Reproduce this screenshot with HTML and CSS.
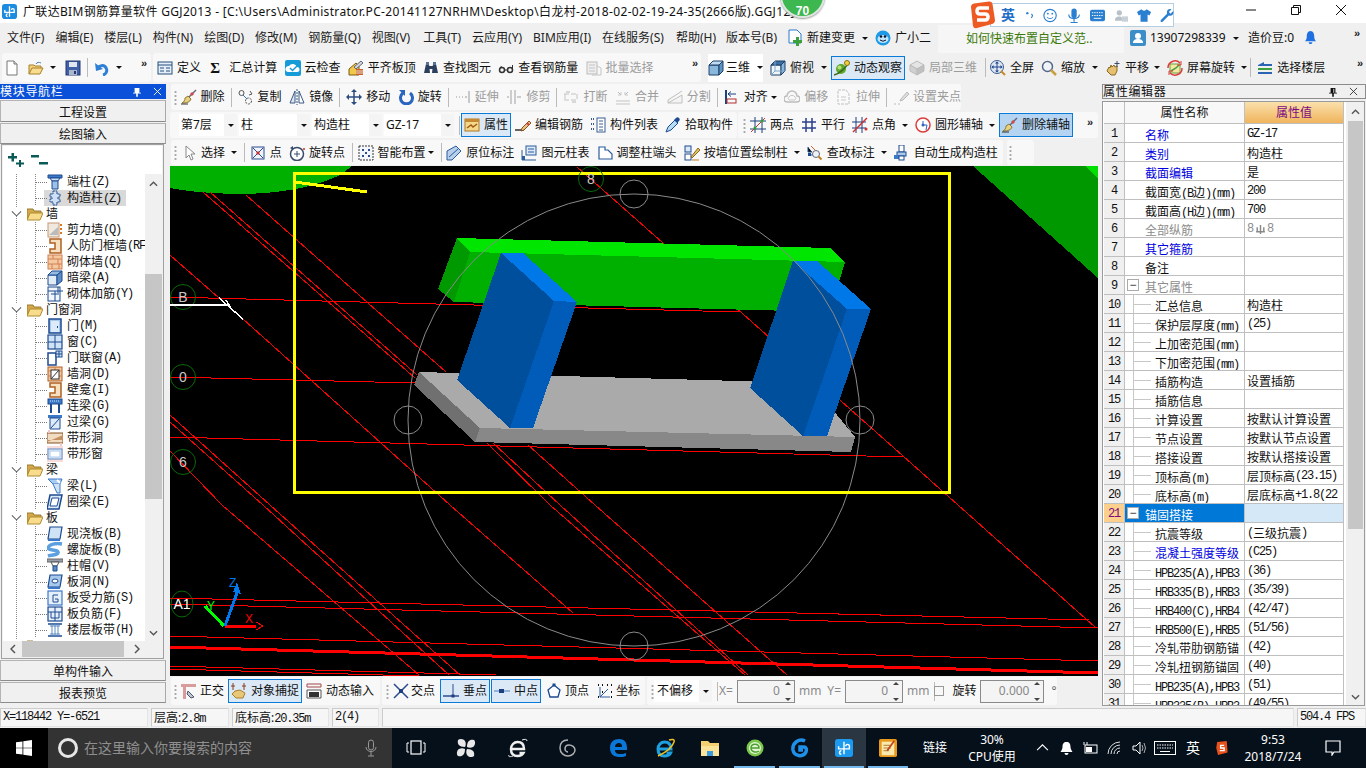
FILE: index.html
```html
<!DOCTYPE html>
<html lang="zh">
<head>
<meta charset="utf-8">
<title>广联达BIM钢筋算量软件 GGJ2013</title>
<link rel="stylesheet" href="styles.css">
</head>
<body>
<svg class="defs" xmlns="http://www.w3.org/2000/svg">
<symbol id="doc" viewBox="0 0 16 16"><path d="M3 1h7l3 3v11H3z" fill="#fff" stroke="#777"/><path d="M10 1v3h3" fill="#ddd" stroke="#777"/></symbol>
<symbol id="open" viewBox="0 0 16 16"><path d="M1 14V5h5l1 1h6v2" fill="#f4d27a" stroke="#a8802c"/><path d="M1 14l3-6h11l-3 6z" fill="#f8dc90" stroke="#a8802c"/><path d="M8 4c1-2 3-2 5-1" fill="none" stroke="#4a78b8"/></symbol>
<symbol id="save" viewBox="0 0 16 16"><rect x="1" y="1" width="14" height="14" fill="#3f5fa6" stroke="#23386c"/><rect x="4" y="2" width="8" height="5" fill="#dfe6f2"/><rect x="4" y="10" width="8" height="5" fill="#aab6cc"/><rect x="9" y="11" width="2" height="3" fill="#23386c"/></symbol>
<symbol id="undo" viewBox="0 0 16 16"><path d="M9 15c4-1 5-6 2-8.500-2-1.500-5-1-7 1" fill="none" stroke="#2f7fd6" stroke-width="3"/><path d="M1 3l1 8 7-2z" fill="#2f7fd6"/></symbol>
<symbol id="def" viewBox="0 0 16 16"><rect x="1" y="2" width="14" height="12" fill="#e6eef8" stroke="#24507e"/><path d="M1 5h14M3 8h4M3 11h4M9 8h4M9 11h4" stroke="#24507e" fill="none"/></symbol>
<symbol id="cloud" viewBox="0 0 16 16"><rect x="0" y="0" width="16" height="16" rx="2" fill="#169ad8"/><path d="M3 12a3 3 0 0 1 1-6 4.500 4.500 0 0 1 8 1 2.500 2.500 0 0 1 0 5z" fill="#fff"/><path d="M5 8l2.500 2.500L12 6" stroke="#169ad8" stroke-width="1.500" fill="none"/></symbol>
<symbol id="alignb" viewBox="0 0 16 16"><path d="M1 9l7-6 3 3v9H1z" fill="#f2c84a" stroke="#7a5a10"/><rect x="8" y="9" width="7" height="6" fill="#c8622c"/><path d="M8 11h7M8 13h7" stroke="#f2dcc8"/><path d="M6 7l7-6 2 2-7 6z" fill="#cfd6de" stroke="#667"/></symbol>
<symbol id="bino" viewBox="0 0 16 16"><path d="M1 13l2-9h3l1 9zM9 13l1-9h3l2 9z" fill="#2c3f5c"/><rect x="6" y="6" width="4" height="3" fill="#2c3f5c"/><rect x="3" y="2" width="3" height="3" fill="#5c7292"/><rect x="10" y="2" width="3" height="3" fill="#5c7292"/></symbol>
<symbol id="glass" viewBox="0 0 16 16"><circle cx="4" cy="10" r="2.500" fill="none" stroke="#333" stroke-width="1.500"/><circle cx="12" cy="10" r="2.500" fill="none" stroke="#333" stroke-width="1.500"/><path d="M6.500 10h3M1.500 9l2-3M14.500 9V5" stroke="#333" fill="none"/></symbol>
<symbol id="batch" viewBox="0 0 16 16"><rect x="1" y="2" width="10" height="12" fill="#eee" stroke="#bbb"/><path d="M3 5h6M3 8h6M3 11h6M11 6l4 2v7H6" stroke="#c4c4c4" fill="none"/></symbol>
<symbol id="cube" viewBox="0 0 16 16"><path d="M1 5h10v10H1z" fill="#8ab8dc" stroke="#1c3f66"/><path d="M1 5l4-4h10l-4 4z" fill="#c0dcf0" stroke="#1c3f66"/><path d="M11 5l4-4v10l-4 4z" fill="#5c94c4" stroke="#1c3f66"/></symbol>
<symbol id="cube2" viewBox="0 0 16 16"><path d="M1 5h10v10H1z" fill="#eef6fc" stroke="#1c3f66"/><path d="M1 5l4-4h10l-4 4z" fill="#3c70a4" stroke="#1c3f66"/><path d="M11 5l4-4v10l-4 4z" fill="#8ab8dc" stroke="#1c3f66"/><path d="M5 1v10H15M5 11l-4 4" stroke="#7ea4c8" fill="none"/></symbol>
<symbol id="orbit" viewBox="0 0 16 16"><circle cx="7" cy="9" r="5" fill="#5ea82c"/><circle cx="5.500" cy="7.500" r="2" fill="#b8e080"/><path d="M0 15C5 14 12 8 15 2" stroke="#3a6c18" fill="none" stroke-width="1.500"/><circle cx="13" cy="3" r="2.500" fill="#f0d040" stroke="#8a7010"/></symbol>
<symbol id="part" viewBox="0 0 16 16"><path d="M8 1l7 4-7 4-7-4z" fill="#e4e4e4" stroke="#bbb"/><path d="M1 5v6l7 4V9z" fill="#d0d0d0" stroke="#bbb"/><path d="M15 5v6l-7 4V9z" fill="#c0c0c0" stroke="#bbb"/></symbol>
<symbol id="full" viewBox="0 0 16 16"><circle cx="7" cy="7" r="6.500" fill="#dde8f4" stroke="#3a5c90"/><path d="M7 2v10M2 7h10" stroke="#24468a" fill="none"/><path d="M7 1.500l-2 2h4zM7 12.500l-2-2h4zM1.500 7l2-2v4zM12.500 7l-2-2v4z" fill="#24468a"/><path d="M11 11l4 4" stroke="#c88a20" stroke-width="2"/></symbol>
<symbol id="zoomi" viewBox="0 0 16 16"><circle cx="6.500" cy="6.500" r="5" fill="#eef3f8" stroke="#55688a" stroke-width="1.500"/><path d="M3.500 5a3 3 0 0 1 3-2" stroke="#fff" fill="none"/><path d="M10 10l5 5" stroke="#c8a040" stroke-width="2.500"/></symbol>
<symbol id="pan" viewBox="0 0 16 16"><path d="M2 11l2-4 1 1 1-3 1 2 2-2 1 2 2-1v5l-2 4H6z" fill="#e4c070" stroke="#8a6a20"/><path d="M12 1v6M9.500 3.500h5" stroke="#3a4a6a"/></symbol>
<symbol id="rot" viewBox="0 0 16 16"><rect x="3" y="4" width="10" height="9" fill="#f2e8a0" stroke="#6aa040"/><path d="M4 11l5-3 3-3" stroke="#48a048" fill="none" stroke-width="1.500"/><path d="M1 8a7 7 0 0 1 12-5M15 8a7 7 0 0 1-12 5" fill="none" stroke="#dc3c3c" stroke-width="1.500"/><path d="M14 1v4h-4M2 15v-4h4" fill="none" stroke="#dc3c3c"/></symbol>
<symbol id="floors" viewBox="0 0 16 16"><path d="M1 5l6-3v2h8v2H1z" fill="#2c64b4"/><path d="M1 8h14v2H1z" fill="#3ca03c"/><path d="M1 12h14v2H1z" fill="#2c64b4"/></symbol>
<symbol id="broom" viewBox="0 0 16 16"><path d="M15 1L7 9" stroke="#667" stroke-width="1.500"/><path d="M10 4l2 2" stroke="#d24a4a" stroke-width="3"/><path d="M7 7l3 3c-1 3-4 4-9 4 2-1 3-3 3-5z" fill="#e8d080" stroke="#8a7a30"/><path d="M0 15h7" stroke="#333"/></symbol>
<symbol id="copy" viewBox="0 0 16 16"><circle cx="3.500" cy="4" r="2.500" fill="none" stroke="#555"/><circle cx="10.500" cy="12" r="3" fill="none" stroke="#555" stroke-dasharray="2 1"/><path d="M5 6l4 4" stroke="#3a72c0"/><path d="M12 2l2 3-3 1" fill="none" stroke="#555"/></symbol>
<symbol id="mirror" viewBox="0 0 16 16"><path d="M6 2L1 14h5z" fill="#dce6f2" stroke="#3a5a84"/><path d="M10 2l5 12h-5z" fill="#fff" stroke="#3a5a84"/><path d="M8 0v16" stroke="#3a5a84" stroke-dasharray="2 1"/></symbol>
<symbol id="move" viewBox="0 0 16 16"><path d="M8 2v12M2 8h12" stroke="#2a4c80" stroke-width="1.500"/><path d="M8 0L5 3h6zM8 16l-3-3h6zM0 8l3-3v6zM16 8l-3-3v6z" fill="#2a4c80"/></symbol>
<symbol id="turn" viewBox="0 0 16 16"><path d="M5 4a6 6 0 1 0 7 0" fill="none" stroke="#2a66c0" stroke-width="3"/><path d="M1 1h6v6z" fill="#2a66c0"/></symbol>
<symbol id="ext" viewBox="0 0 16 16"><path d="M14 2v12M1 8h1M4 8h1M7 8h1M10 8h2" stroke="#b8b8b8" stroke-width="1.500"/></symbol>
<symbol id="trim" viewBox="0 0 16 16"><path d="M5 1v14M9 1v14M1 8h2M11 8h4" stroke="#bdbdbd" stroke-width="1.500"/></symbol>
<symbol id="brk" viewBox="0 0 16 16"><path d="M1 5h14M1 11h14M2 5v6M14 5v6" stroke="#c4c4c4" stroke-dasharray="5 2"/><path d="M3 3h4M13 13H9" stroke="#b8b8b8"/></symbol>
<symbol id="mrg" viewBox="0 0 16 16"><path d="M1 12h14M1 15h14" stroke="#c4c4c4"/><path d="M3 3l3 3M13 3l-3 3" stroke="#b8b8b8"/><path d="M6 3v3H3M10 3v3h3" fill="none" stroke="#c8c8c8"/></symbol>
<symbol id="spl" viewBox="0 0 16 16"><path d="M1 14h14V6L1 14zM1 14v-3l14-9" fill="#f4f4f4" stroke="#c0c0c0"/></symbol>
<symbol id="aln" viewBox="0 0 16 16"><path d="M2 1v14" stroke="#1c3f80" stroke-width="2"/><rect x="3" y="10" width="9" height="4" fill="none" stroke="#b03030"/><path d="M4 5h8M4 5l3-2.500M4 5l3 2.500" stroke="#1c3f80" fill="none"/></symbol>
<symbol id="off" viewBox="0 0 16 16"><path d="M3 13a3 3 0 0 1 0-6 5 5 0 0 1 10 0 3 3 0 0 1 0 6z" fill="none" stroke="#bdbdbd" stroke-width="1.500"/><path d="M5 11a2 2 0 0 1 0-3 3.500 3.500 0 0 1 6 0 2 2 0 0 1 0 3z" fill="none" stroke="#c8c8c8"/></symbol>
<symbol id="str" viewBox="0 0 16 16"><path d="M2 1h8l3 4v10H2z" fill="#fafafa" stroke="#c0c0c0" stroke-dasharray="3 1"/><path d="M5 8h5M5 11h5" stroke="#c8c8c8"/></symbol>
<symbol id="grp" viewBox="0 0 16 16"><path d="M1 15h2M5 15h2" stroke="#bbb"/><path d="M8 10l6-7 2 2-6 6-3 1z" fill="#ddd" stroke="#bbb"/></symbol>
<symbol id="attr" viewBox="0 0 16 16"><rect x="1" y="2" width="14" height="12" fill="#f5d88c" stroke="#b0781c"/><rect x="1" y="2" width="14" height="3" fill="#c88a30"/><path d="M3 11l4-3 2 2 4-3" stroke="#a05c10" fill="none" stroke-width="1.500"/></symbol>
<symbol id="edit" viewBox="0 0 16 16"><path d="M0 13h9" stroke="#333" stroke-width="1.500"/><path d="M7 11l7-7 2 2-7 7-3 1z" fill="#e8c080" stroke="#8a5020"/><path d="M12 6l2 2" stroke="#d04040" stroke-width="2"/></symbol>
<symbol id="lst" viewBox="0 0 16 16"><rect x="7" y="1" width="8" height="14" fill="#fff" stroke="#3a5c90"/><path d="M9 4h4M9 7h4M9 10h4M9 13h4" stroke="#3a5c90"/><path d="M1 2h3M1 7h3M1 12h3" stroke="#3a5c90" stroke-width="2" stroke-dasharray="1 1"/></symbol>
<symbol id="pick" viewBox="0 0 16 16"><path d="M1 15l2-5 7-7 3 3-7 7z" fill="#b8dcf4" stroke="#1c4a90"/><path d="M9 3l2-2c1-1 2-1 3 0s1 2 0 3l-2 2" fill="#1c4a90"/></symbol>
<symbol id="two" viewBox="0 0 16 16"><path d="M5 0v16M12 0v16M0 4h16M0 12h16" stroke="#1c3f80"/><path d="M1 15L15 1" stroke="#d03030"/><circle cx="5" cy="11" r="1.500" fill="#30a030"/><circle cx="12" cy="4" r="1.500" fill="#30a030"/></symbol>
<symbol id="par" viewBox="0 0 16 16"><path d="M5 1v14M11 1v14M1 5h14M1 11h14" stroke="#2c3f8c" stroke-width="1.500"/></symbol>
<symbol id="ang" viewBox="0 0 16 16"><path d="M4 0v16M10 0v16M0 5h14M0 11h14" stroke="#1c3f80"/><path d="M1 15L15 1" stroke="#d03030" stroke-width="1.500"/><circle cx="14" cy="12" r="1.500" fill="#d03030"/></symbol>
<symbol id="circ" viewBox="0 0 16 16"><circle cx="8" cy="8" r="7" fill="#fff" stroke="#dc3c3c" stroke-width="1.500"/><path d="M8 8V4M8 8h4l-1 5" stroke="#2a66c0" fill="none"/><circle cx="8" cy="8" r="1.500" fill="#2a66c0"/></symbol>
<symbol id="sel" viewBox="0 0 16 16"><path d="M5 1v12l3-3 2 5 2-1-2-5h4z" fill="#fff" stroke="#888"/></symbol>
<symbol id="pnt" viewBox="0 0 16 16"><rect x="2" y="2" width="12" height="12" fill="#f0f4fa" stroke="#2c4c90"/><path d="M3 3l10 10M13 3L3 13" stroke="#2c4c90"/><rect x="6.500" y="6.500" width="3" height="3" fill="#c83030"/></symbol>
<symbol id="rpt" viewBox="0 0 16 16"><circle cx="8" cy="9" r="6.500" fill="#fff" stroke="#3a4c68" stroke-width="1.500"/><path d="M8 6v6M5 9h6" stroke="#3a4c68"/><path d="M1 3l3-2v4z" fill="#3a4c68"/><circle cx="15" cy="4" r="1" fill="#c83030"/></symbol>
<symbol id="smart" viewBox="0 0 16 16"><rect x="1" y="1" width="14" height="14" fill="#f4f8fc" stroke="#333" stroke-dasharray="2 1"/><path d="M4 4h2v2H4zM10 4h2v2h-2zM7 7h2v2H7zM4 10h2v2H4zM10 10h2v2h-2z" fill="#2c4c90"/></symbol>
<symbol id="orig" viewBox="0 0 16 16"><path d="M1 15V6l9-5 5 5-9 9z" fill="#b8d0ec" stroke="#2c5c9c"/><path d="M3 12l9-8" stroke="#2c5c9c"/></symbol>
<symbol id="ctab" viewBox="0 0 16 16"><rect x="5" y="1" width="10" height="9" fill="#dce8f6" stroke="#2c5c9c"/><path d="M7 4h6M7 7h6" stroke="#2c5c9c"/><path d="M1 5v10h14" stroke="#2c5c9c" fill="none"/><rect x="1" y="11" width="3" height="4" fill="#2c5c9c"/></symbol>
<symbol id="adj" viewBox="0 0 16 16"><path d="M2 2h6v3h3l4 4v5H2z" fill="#fff" stroke="#2c5c9c" stroke-width="1.200"/></symbol>
<symbol id="wdraw" viewBox="0 0 16 16"><rect x="1" y="1" width="6" height="6" fill="#dce8f6" stroke="#1c4a90"/><rect x="1" y="9" width="6" height="6" fill="#fff" stroke="#1c4a90"/><path d="M8 15h7" stroke="#c08020"/><path d="M7 12l7-9 2 2-8 8z" fill="#e0c060" stroke="#8a6a20"/></symbol>
<symbol id="chk" viewBox="0 0 16 16"><path d="M1 2v5h4M1 10h5" stroke="#1c4a90"/><rect x="1" y="8" width="3" height="3" fill="#1c4a90"/><circle cx="9" cy="9" r="3.500" fill="#eef3f8" stroke="#667"/><path d="M11.500 11.500l3 3" stroke="#c08020" stroke-width="2"/><path d="M4 1l4 4" stroke="#d06030"/></symbol>
<symbol id="auto" viewBox="0 0 16 16"><rect x="5" y="0" width="5" height="7" fill="#fff" stroke="#1c4a90"/><rect x="3" y="7" width="9" height="4" fill="#a8c8ec" stroke="#1c4a90"/><rect x="0" y="10" width="5" height="4" fill="#3c78c8"/><rect x="5" y="11" width="5" height="4" fill="#fff" stroke="#1c4a90"/></symbol>
<symbol id="ortho" viewBox="0 0 16 16"><path d="M1 1h15v3H6v12H3V4H1z" fill="#d89c9c"/><path d="M8 8l6 6-3 1-4-4z" fill="#b8c8d4" stroke="#556"/></symbol>
<symbol id="snap" viewBox="0 0 16 16"><path d="M2 0v7M13 0v7" stroke="#8a3a20"/><path d="M0 3h4M11 3h4" stroke="#8a3a20"/><path d="M1 11l3-3 5-1 5 3-2 5H5z" fill="#e8c878" stroke="#a8802c"/></symbol>
<symbol id="dyn" viewBox="0 0 16 16"><path d="M1 1h14M1 4h14M1 1v3M15 1v3" stroke="#a04848"/><path d="M1 7h14v8H1z" fill="#fff" stroke="#555"/><rect x="3" y="9" width="10" height="5" fill="#333"/></symbol>
<symbol id="cross" viewBox="0 0 16 16"><path d="M1 1l14 14M15 1L1 15" stroke="#2c4c90" stroke-width="1.500"/><rect x="6" y="6" width="4" height="4" fill="#1c3f80"/></symbol>
<symbol id="perp" viewBox="0 0 16 16"><path d="M0 13h16" stroke="#2c4c90" stroke-width="1.500"/><path d="M10 1v12" stroke="#2c4c90"/><rect x="8.500" y="11.500" width="3" height="3" fill="#1c3f80"/></symbol>
<symbol id="mid" viewBox="0 0 16 16"><path d="M0 8h16" stroke="#7aa0d0" stroke-width="1.500"/><rect x="5" y="6" width="5" height="4" fill="#1c3f80"/></symbol>
<symbol id="vtx" viewBox="0 0 16 16"><path d="M8 2l6 5-2 7H4L2 7z" fill="#fff" stroke="#1c4a90" stroke-width="1.300"/><rect x="6.500" y="0.500" width="3" height="3" fill="#1c4a90"/></symbol>
<symbol id="coo" viewBox="0 0 16 16"><path d="M3 14V4M3 14h10M3 14l8-8" stroke="#2c5ca4"/><path d="M1 2h1M5 2h1M10 2h1M14 2h1M1 14h1M14 14h1M14 9h1M5 9h1" stroke="#111" stroke-width="2"/></symbol>
<symbol id="t-col" viewBox="0 0 16 16"><path d="M1 1h14v3H1z" fill="#3c78c8" stroke="#1c4a90"/><path d="M3 4h10L11 7H5z" fill="#cfe2f6" stroke="#1c4a90"/><path d="M5 7h6v8H5z" fill="#9cc0e8" stroke="#1c4a90"/></symbol>
<symbol id="t-gz" viewBox="0 0 16 16"><path d="M6 1h4v3h3v3h-2v2h2v3h-3v3H6v-3H3V9h2V7H3V4h3z" fill="#cfe0f4" stroke="#1c4a90" stroke-dasharray="2 .5"/></symbol>
<symbol id="t-shear" viewBox="0 0 16 16"><rect x="1" y="1" width="11" height="14" fill="#efe9e0" stroke="#c89870"/><path d="M2 13l9-8v8z" fill="#bbb"/><path d="M14 2v12" stroke="#d87820" stroke-width="2" stroke-dasharray="2 2"/></symbol>
<symbol id="t-rf" viewBox="0 0 16 16"><path d="M3 1h11v14H3v-4h5V5H3z" fill="#f6e0c0" stroke="#b06020" stroke-width="1.500"/></symbol>
<symbol id="t-brick" viewBox="0 0 16 16"><rect x="1" y="1" width="14" height="14" fill="#f4c8a0" stroke="#d08050"/><path d="M1 5h14M1 10h14M6 1v4M11 5v5M5 10v5M12 10v5" stroke="#d08050"/></symbol>
<symbol id="t-dark" viewBox="0 0 16 16"><path d="M1 5v10h9V5z" fill="#e2ecf6" stroke="#1c4a90"/><path d="M1 5l4-4h10l-5 4z" fill="#98bce0" stroke="#1c4a90"/><path d="M10 5l5-4v10l-5 4z" fill="#5c8cc4" stroke="#1c4a90"/></symbol>
<symbol id="t-add" viewBox="0 0 16 16"><rect x="1" y="1" width="12" height="14" fill="#f2f6fc" stroke="#1c4a90"/><path d="M1 5h15M4 8h8M8 5v10M11 1v6" stroke="#1c4a90"/></symbol>
<symbol id="t-door" viewBox="0 0 16 16"><rect x="2" y="1" width="12" height="14" fill="#a8c8ec" stroke="#1c4a90" stroke-width="1.500"/><rect x="4" y="3" width="8" height="11" fill="#dceafa"/><rect x="10" y="8" width="1" height="2" fill="#1c4a90"/></symbol>
<symbol id="t-win" viewBox="0 0 16 16"><rect x="1" y="1" width="14" height="14" fill="#cfe2f6" stroke="#1c4a90" stroke-width="1.200"/><path d="M8 1v14M1 8h14" stroke="#1c4a90"/></symbol>
<symbol id="t-dw" viewBox="0 0 16 16"><rect x="1" y="3" width="8" height="12" fill="#fff" stroke="#1c4a90" stroke-width="1.500"/><rect x="9" y="1" width="6" height="6" fill="#cfe2f6" stroke="#1c4a90"/><path d="M12 1v6M9 4h6" stroke="#1c4a90"/></symbol>
<symbol id="t-hole" viewBox="0 0 16 16"><rect x="1" y="1" width="14" height="14" fill="#f4c8a0" stroke="#b06020"/><path d="M1 5h14M1 10h14M8 1v4" stroke="#d08050"/><rect x="4" y="4" width="8" height="9" fill="#fff" stroke="#333"/><path d="M4 13l8-9" stroke="#333"/></symbol>
<symbol id="t-ll" viewBox="0 0 16 16"><rect x="1" y="1" width="14" height="5" fill="#3c78c8" stroke="#1c4a90"/><path d="M3 3h10" stroke="#cfe2f6" stroke-dasharray="1 1"/><path d="M4 6v9M12 6v9" stroke="#1c4a90" stroke-width="2"/></symbol>
<symbol id="t-gl" viewBox="0 0 16 16"><rect x="1" y="1" width="14" height="3" fill="#3c78c8"/><path d="M3 4h10v11H3z" fill="#dceafa" stroke="#1c4a90"/><path d="M4 14l8-9" stroke="#1c4a90"/></symbol>
<symbol id="t-bh" viewBox="0 0 16 16"><rect x="0" y="3" width="16" height="10" fill="#f0dcc0" stroke="#8a5020"/><path d="M0 12L16 5v5H0z" fill="#c89060"/><path d="M2 0v3M14 13v3" stroke="#f0c8c8" stroke-width="2"/></symbol>
<symbol id="t-bw" viewBox="0 0 16 16"><path d="M0 0h16v16H0z" fill="#f8dcdc"/><rect x="1" y="3" width="14" height="10" fill="#e6eefa" stroke="#5c8cc4"/><rect x="3" y="5" width="10" height="6" fill="#fff" stroke="#a8c8ec"/></symbol>
<symbol id="t-beam" viewBox="0 0 16 16"><path d="M1 1h14l-2 5H6z" fill="#a8cdf0" stroke="#3c78c8"/><path d="M6 6l4 9h3V6" fill="#cfe2f6" stroke="#3c78c8"/><path d="M10 2l3 3" stroke="#fff" stroke-width="2"/></symbol>
<symbol id="t-ring" viewBox="0 0 16 16"><path d="M3 1h12l-3 14H0z" fill="#dceafa" stroke="#1c4a90" stroke-width="1.500"/><path d="M5 4h7l-2 8H3z" fill="#fff" stroke="#1c4a90"/></symbol>
<symbol id="t-slab" viewBox="0 0 16 16"><path d="M3 1h12l-2 12H1z" fill="#cfe2f6" stroke="#1c4a90" stroke-width="1.200"/><path d="M1 13h12v2H1z" fill="#3c78c8"/></symbol>
<symbol id="t-spi" viewBox="0 0 16 16"><path d="M15 2C9 1 2 2 1 6c0 3 9 1 10 4s-7 3-10 4" fill="none" stroke="#5ca0e0" stroke-width="3.500"/></symbol>
<symbol id="t-cap" viewBox="0 0 16 16"><path d="M0 1h16v3H0z" fill="#9a9ea8" stroke="#666"/><path d="M4 4h8l-2 4H6z" fill="#fff" stroke="#555"/><path d="M6 8h4v5H6z" fill="#5c8cc4" stroke="#1c4a90"/></symbol>
<symbol id="t-sh" viewBox="0 0 16 16"><path d="M3 1h12l-2 12H1z" fill="#a8c8ec" stroke="#1c4a90" stroke-width="1.200"/><ellipse cx="8" cy="7" rx="3" ry="2" fill="#fff" stroke="#1c4a90"/><path d="M1 13h12v2H1z" fill="#3c78c8"/></symbol>
<symbol id="t-rs" viewBox="0 0 16 16"><rect x="1" y="1" width="14" height="14" fill="#e6eefa" stroke="#3c78c8" stroke-width="1.200"/><path d="M11 5H6v7h5V9H8" fill="none" stroke="#1c4a90"/></symbol>
<symbol id="t-rf2" viewBox="0 0 16 16"><rect x="1" y="1" width="14" height="14" fill="#e6eefa" stroke="#1c4a90" stroke-width="1.200"/><path d="M1 6h14M8 1v14M4 6v6M12 6v6M4 12h8" stroke="#1c4a90"/></symbol>
<symbol id="t-band" viewBox="0 0 16 16"><path d="M1 2h14M1 14h14" stroke="#1c4a90" stroke-width="1.500"/><path d="M3 4h10M3 12h10M5 2v12M8 2v12M11 2v12" stroke="#5c8cc4"/></symbol>
<symbol id="folder" viewBox="0 0 16 16"><path d="M0 13V3h6l1 2h7v3H3l-3 5z" fill="#d4a848" stroke="#9a7a30"/><path d="M0 14l3-7h13l-3 7z" fill="#f8dc8c" stroke="#b08a30"/></symbol>
<symbol id="pin" viewBox="0 0 10 12"><path d="M2 1h6v6h2v1H0V7h2zM4 8h2v4H4z" fill="#111"/><rect x="5.500" y="2" width="1" height="5" fill="#fff"/></symbol>
</svg>

<div class="app">
  <header class="title">
    <svg class="appicon" viewBox="0 0 16 16"><rect width="16" height="16" rx="3" fill="#1c8ce0"/><path d="M8 2.500v11M3 6.500v2.500h10V6.500a1.500 1.500 0 0 0-3 0M6 10.500a1.500 1.500 0 0 0 0 3" fill="none" stroke="#fff" stroke-width="1.400"/></svg>
    <span class="title-text">广联达BIM钢筋算量软件 GGJ2013 - [C:\Users\Administrator.PC-20141127NRHM\Desktop\白龙村-2018-02-02-19-24-35(2666版).GGJ12]</span>
    <div class="winbtns">
      <svg class="wb" viewBox="0 0 12 12"><path d="M1 6h10" stroke="#111"/></svg>
      <svg class="wb" viewBox="0 0 12 12"><path d="M1.500 3.500h7v7h-7zM3.500 3.500v-2h7v7h-2" fill="none" stroke="#111"/></svg>
      <svg class="wb" viewBox="0 0 12 12"><path d="M1 1l10 10M11 1L1 11" stroke="#111"/></svg>
    </div>
  </header>

  <nav class="menubar">
    <span class="mi">文件(F)</span><span class="mi">编辑(E)</span><span class="mi">楼层(L)</span><span class="mi">构件(N)</span><span class="mi">绘图(D)</span><span class="mi">修改(M)</span><span class="mi">钢筋量(Q)</span><span class="mi">视图(V)</span><span class="mi">工具(T)</span><span class="mi">云应用(Y)</span><span class="mi">BIM应用(I)</span><span class="mi">在线服务(S)</span><span class="mi">帮助(H)</span><span class="mi">版本号(B)</span>
    <span class="t newchg"><svg class="i" viewBox="0 0 16 16"><path d="M2 0h8l4 4v9H2z" fill="#fff" stroke="#2a7bd0"/><path d="M6 10h3V7h3v3h3v3h-3v3H9v-3H6z" fill="#3ca03c"/></svg>新建变更<i class="dd dd-m"></i></span>
    <span class="t xiao"><svg class="i" viewBox="0 0 16 16"><circle cx="8" cy="8" r="7.500" fill="#1c9ae8"/><ellipse cx="8" cy="9" rx="5.500" ry="4" fill="#bfe6fb"/><circle cx="6" cy="6.500" r="1.300" fill="#113"/><circle cx="10" cy="6.500" r="1.300" fill="#113"/><path d="M5 10q3 2.500 6 0" stroke="#113" fill="none"/></svg>广小二</span>
    <span class="news">如何快速布置自定义范..</span>
    <span class="t user"><svg class="i" viewBox="0 0 16 16"><rect width="16" height="16" rx="2" fill="#3c8ec8"/><circle cx="8" cy="6" r="3" fill="#fff"/><path d="M3 13c0-3 2-4 5-4s5 1 5 4z" fill="#fff"/></svg>13907298339<i class="dd dd-u"></i></span>
    <span class="bean">造价豆:0</span>
    <svg class="bell" viewBox="0 0 14 16"><path d="M7 1c3 0 4 3 4 6 0 3 1 4 2 5H1c1-1 2-2 2-5 0-3 1-6 4-6z" fill="#1f6fe0"/><path d="M5 13h4a2 2 0 0 1-4 0z" fill="#1f6fe0"/></svg>
    <b class="more more-m">»</b>
  </nav>

  <div class="tb1">
    <div class="grp g1">
      <svg class="i"><use href="#doc"/></svg><svg class="i fo"><use href="#open"/></svg><i class="dd"></i><svg class="i sv"><use href="#save"/></svg><i class="sep"></i><svg class="i"><use href="#undo"/></svg><i class="dd"></i><b class="more">»</b>
    </div>
    <div class="grp g2">
      <span class="t"><svg class="i"><use href="#def"/></svg>定义</span>
      <span class="t sg"><b class="sigma">Σ</b>汇总计算</span>
      <span class="t"><svg class="i"><use href="#cloud"/></svg>云检查</span>
      <span class="t"><svg class="i"><use href="#alignb"/></svg>平齐板顶</span>
      <span class="t"><svg class="i"><use href="#bino"/></svg>查找图元</span>
      <span class="t"><svg class="i"><use href="#glass"/></svg>查看钢筋量</span>
      <span class="t off"><svg class="i"><use href="#batch"/></svg>批量选择</span>
      <b class="more m-end">»</b>
    </div>
    <div class="grp g3">
      <span class="t w3"><svg class="i"><use href="#cube"/></svg>三维<i class="dd"></i></span>
      <span class="t"><svg class="i"><use href="#cube2"/></svg>俯视<i class="dd"></i></span>
      <span class="t on"><svg class="i"><use href="#orbit"/></svg>动态观察</span>
      <span class="t off"><svg class="i"><use href="#part"/></svg>局部三维</span>
      <i class="sep"></i>
      <span class="t"><svg class="i"><use href="#full"/></svg>全屏</span>
      <span class="t"><svg class="i"><use href="#zoomi"/></svg>缩放<i class="dd"></i></span>
      <span class="t"><svg class="i"><use href="#pan"/></svg>平移<i class="dd dd-s"></i></span>
      <span class="t"><svg class="i"><use href="#rot"/></svg>屏幕旋转<i class="dd dd-n"></i></span>
      <i class="sep sep-b"></i>
      <span class="t"><svg class="i"><use href="#floors"/></svg>选择楼层</span>
      <b class="more m-end">»</b>
    </div>
  </div>

  <main class="work">
    <aside class="left">
      <div class="nav-head"><span>模块导航栏</span><svg class="pin" viewBox="0 0 10 12"><path d="M2 1h6v6h2v1H0V7h2zM4 8h2v4H4z" fill="#fff"/></svg><svg class="xx" viewBox="0 0 10 10"><path d="M1 1l8 8M9 1L1 9" stroke="#fff"/></svg></div>
      <div class="navbtn">工程设置</div>
      <div class="navbtn h21">绘图输入</div>
      <div class="treebox">
        <div class="treetool">
          <svg class="pm" viewBox="0 0 18 14"><path d="M3.500 0H6v3h3v2.500H6v3H3.500v-3H0V3h3.500zM11 7h2v2.500h3v2h-3V14h-2v-2.500H8v-2h3z" fill="#0a5a58"/></svg>
          <svg class="pm" viewBox="0 0 18 14"><path d="M0 2h8v2.500H0zM8 9h9v2.500H8z" fill="#0a5a58"/></svg>
        </div>
        <div class="treewrap">
          <div class="tree">
            <div class="n leaf"><svg class="i"><use href="#t-col"/></svg>端柱<i class="m">(Z)</i></div>
            <div class="n leaf last"><svg class="i"><use href="#t-gz"/></svg><span class="hl">构造柱<i class="m">(Z)</i></span></div>
            <div class="n fold"><i class="chev"></i><svg class="i"><use href="#folder"/></svg>墙</div>
            <div class="n leaf"><svg class="i"><use href="#t-shear"/></svg>剪力墙<i class="m">(Q)</i></div>
            <div class="n leaf"><svg class="i"><use href="#t-rf"/></svg>人防门框墙<i class="m">(RF</i></div>
            <div class="n leaf"><svg class="i"><use href="#t-brick"/></svg>砌体墙<i class="m">(Q)</i></div>
            <div class="n leaf"><svg class="i"><use href="#t-dark"/></svg>暗梁<i class="m">(A)</i></div>
            <div class="n leaf last"><svg class="i"><use href="#t-add"/></svg>砌体加筋<i class="m">(Y)</i></div>
            <div class="n fold"><i class="chev"></i><svg class="i"><use href="#folder"/></svg>门窗洞</div>
            <div class="n leaf"><svg class="i"><use href="#t-door"/></svg>门<i class="m">(M)</i></div>
            <div class="n leaf"><svg class="i"><use href="#t-win"/></svg>窗<i class="m">(C)</i></div>
            <div class="n leaf"><svg class="i"><use href="#t-dw"/></svg>门联窗<i class="m">(A)</i></div>
            <div class="n leaf"><svg class="i"><use href="#t-hole"/></svg>墙洞<i class="m">(D)</i></div>
            <div class="n leaf"><svg class="i"><use href="#t-rf"/></svg>壁龛<i class="m">(I)</i></div>
            <div class="n leaf"><svg class="i"><use href="#t-ll"/></svg>连梁<i class="m">(G)</i></div>
            <div class="n leaf"><svg class="i"><use href="#t-gl"/></svg>过梁<i class="m">(G)</i></div>
            <div class="n leaf"><svg class="i"><use href="#t-bh"/></svg>带形洞</div>
            <div class="n leaf last"><svg class="i"><use href="#t-bw"/></svg>带形窗</div>
            <div class="n fold"><i class="chev"></i><svg class="i"><use href="#folder"/></svg>梁</div>
            <div class="n leaf"><svg class="i"><use href="#t-beam"/></svg>梁<i class="m">(L)</i></div>
            <div class="n leaf last"><svg class="i"><use href="#t-ring"/></svg>圈梁<i class="m">(E)</i></div>
            <div class="n fold"><i class="chev"></i><svg class="i"><use href="#folder"/></svg>板</div>
            <div class="n leaf"><svg class="i"><use href="#t-slab"/></svg>现浇板<i class="m">(B)</i></div>
            <div class="n leaf"><svg class="i"><use href="#t-spi"/></svg>螺旋板<i class="m">(B)</i></div>
            <div class="n leaf"><svg class="i"><use href="#t-cap"/></svg>柱帽<i class="m">(V)</i></div>
            <div class="n leaf"><svg class="i"><use href="#t-sh"/></svg>板洞<i class="m">(N)</i></div>
            <div class="n leaf"><svg class="i"><use href="#t-rs"/></svg>板受力筋<i class="m">(S)</i></div>
            <div class="n leaf"><svg class="i"><use href="#t-rf2"/></svg>板负筋<i class="m">(F)</i></div>
            <div class="n leaf last"><svg class="i"><use href="#t-band"/></svg>楼层板带<i class="m">(H)</i></div>
            <div class="n fold"><i class="chev"></i><svg class="i"><use href="#folder"/></svg></div>
          </div>
          <div class="vscroll"><svg class="arr" viewBox="0 0 10 6"><path d="M1 5l4-4 4 4" fill="none" stroke="#555" stroke-width="1.500"/></svg><div class="vthumb"></div><svg class="arr arr-d" viewBox="0 0 10 6"><path d="M1 1l4 4 4-4" fill="none" stroke="#555" stroke-width="1.500"/></svg></div>
        </div>
        <div class="hscroll"><svg class="arrh" viewBox="0 0 6 10"><path d="M5 1L1 5l4 4" fill="none" stroke="#555" stroke-width="1.500"/></svg><div class="hthumb"></div><svg class="arrh arrh-r" viewBox="0 0 6 10"><path d="M1 1l4 4-4 4" fill="none" stroke="#555" stroke-width="1.500"/></svg></div>
      </div>
      <div class="navbtn h21">单构件输入</div>
      <div class="navbtn h21">报表预览</div>
    </aside>

    <section class="mid">
      <div class="rowa">
        <div class="grp ga">
          <i class="grip"></i>
          <span class="t"><svg class="i"><use href="#broom"/></svg>删除</span><i class="sep"></i>
          <span class="t"><svg class="i"><use href="#copy"/></svg>复制</span>
          <span class="t"><svg class="i"><use href="#mirror"/></svg>镜像</span><i class="sep"></i>
          <span class="t"><svg class="i"><use href="#move"/></svg>移动</span>
          <span class="t"><svg class="i"><use href="#turn"/></svg>旋转</span><i class="sep"></i>
          <span class="t off"><svg class="i"><use href="#ext"/></svg>延伸</span>
          <span class="t off"><svg class="i"><use href="#trim"/></svg>修剪</span><i class="sep"></i>
          <span class="t off"><svg class="i"><use href="#brk"/></svg>打断</span>
          <span class="t off"><svg class="i"><use href="#mrg"/></svg>合并</span>
          <span class="t off"><svg class="i"><use href="#spl"/></svg>分割</span><i class="sep"></i>
          <span class="t"><svg class="i"><use href="#aln"/></svg>对齐<i class="dd dd-x"></i></span>
          <span class="t off"><svg class="i"><use href="#off"/></svg>偏移</span>
          <span class="t off"><svg class="i"><use href="#str"/></svg>拉伸</span><i class="sep"></i>
          <span class="t off"><svg class="i"><use href="#grp"/></svg>设置夹点</span>
        </div>
      </div>
      <div class="rowb">
        <div class="grp gb1">
          <div class="sel s1"><span>第7层</span><i class="ddc"><i class="dd"></i></i></div>
          <div class="sel s2"><span>柱</span><i class="ddc"><i class="dd"></i></i></div>
          <div class="sel s3"><span>构造柱</span><i class="ddc"><i class="dd"></i></i></div>
          <div class="sel s4"><span>GZ-17</span><i class="ddc"><i class="dd"></i></i></div>
          <i class="sep sb"></i>
          <span class="t on"><svg class="i"><use href="#attr"/></svg>属性</span>
          <span class="t"><svg class="i"><use href="#edit"/></svg>编辑钢筋</span>
          <span class="t"><svg class="i"><use href="#lst"/></svg>构件列表</span>
          <span class="t"><svg class="i"><use href="#pick"/></svg>拾取构件</span>
        </div>
        <div class="grp gb2">
          <i class="grip"></i>
          <span class="t"><svg class="i"><use href="#two"/></svg>两点</span>
          <span class="t"><svg class="i"><use href="#par"/></svg>平行</span>
          <span class="t"><svg class="i"><use href="#ang"/></svg>点角<i class="dd"></i></span>
          <span class="t"><svg class="i"><use href="#circ"/></svg>圆形辅轴<i class="dd"></i></span>
          <span class="t on2"><svg class="i"><use href="#broom"/></svg>删除辅轴</span>
          <b class="more m-b">»</b>
        </div>
      </div>
      <div class="rowc">
        <div class="grp gc">
          <i class="grip"></i>
          <span class="t"><svg class="i"><use href="#sel"/></svg>选择<i class="dd"></i></span><i class="sep"></i>
          <span class="t"><svg class="i"><use href="#pnt"/></svg>点</span>
          <span class="t"><svg class="i"><use href="#rpt"/></svg>旋转点</span><i class="sep"></i>
          <span class="t"><svg class="i"><use href="#smart"/></svg>智能布置<i class="dd dd-y"></i></span><i class="sep"></i>
          <span class="t"><svg class="i"><use href="#orig"/></svg>原位标注</span>
          <span class="t"><svg class="i"><use href="#ctab"/></svg>图元柱表</span>
          <span class="t"><svg class="i"><use href="#adj"/></svg>调整柱端头</span>
          <span class="t"><svg class="i"><use href="#wdraw"/></svg>按墙位置绘制柱<i class="dd"></i></span>
          <span class="t"><svg class="i"><use href="#chk"/></svg>查改标注<i class="dd"></i></span>
          <span class="t"><svg class="i"><use href="#auto"/></svg>自动生成构造柱</span>
        </div>
        <div class="grp gc2"><i class="grip"></i></div>
      </div>

      <svg class="canvas" viewBox="170 166 928 510" xmlns="http://www.w3.org/2000/svg">
        <rect x="170" y="166" width="928" height="510" fill="#000"/>
        <g class="green-bg">
          <path d="M170 166H352L340 175Q300 194 237 194Q195 193 170 188z" fill="#00b000"/>
          <path d="M973 166H1085L1098 178V278z" fill="#009800"/>
          <path d="M1085 166H1098V178z" fill="#00e000"/>
        </g>
        <g class="red" fill="none" stroke="#f00" stroke-width="1">
          <path d="M170 451L222 505 419 675M170 422L263 505 449 675M170 415L270 505 460 675M243 319L450 505 573 613"/>
          <path d="M170 255L219 298"/>
          <path d="M203 192L415 378M210 192L417 375M246 195L446 372"/>
          <path d="M487 443L550 505 745 675M493 443L560 505 748 675M528 445L595 505 787 675"/>
          <path d="M577 167L663 243 903 456 958 505 1095 627"/>
          <path d="M170 297L740 312M170 377L415 383M170 437L903 457"/>
          <path d="M170 598L1089 620M170 604L1098 628M170 636L1098 661M170 666L496 675M170 669L419 676"/>
          <path d="M170 647L1098 673" stroke-width="3"/>
        </g>
        <g class="solid">
          <path d="M419 372L811 383 855 437 480 428z" fill="#aaa"/>
          <path d="M419 372L480 428 475 442 414 385z" fill="#707070"/>
          <path d="M480 428L855 437 851 452 475 442z" fill="#888"/>
          <path d="M457 238L830 248 845 262 470 252z" fill="#00e600"/>
          <path d="M470 252L845 262 830 312 454 302z" fill="#00b000"/>
          <path d="M457 238L470 252 454 302 438 289z" fill="#009a00"/>
          <path d="M501 253H523L577 302 554 301z" fill="#0078e8"/>
          <path d="M501 253L554 301 510 428 457 380z" fill="#004f9c"/>
          <path d="M554 301L577 302 533 428H510z" fill="#005cb8"/>
          <path d="M793 261H817L871 309H847z" fill="#0078e8"/>
          <path d="M793 261L847 309 803 436 750 388z" fill="#004f9c"/>
          <path d="M847 309H871L827 436H803z" fill="#005cb8"/>
        </g>
        <g class="circles" fill="none" stroke="#8a8a8a">
          <circle cx="634" cy="420" r="226"/>
          <circle cx="634" cy="194" r="14"/>
          <circle cx="408" cy="420" r="14"/>
          <circle cx="860" cy="420" r="14"/>
          <circle cx="634" cy="646" r="14"/>
        </g>
        <g class="yellow" fill="none" stroke="#ff0">
          <rect x="294.500" y="173.500" width="655" height="319" stroke-width="3"/>
          <path d="M295 182L367 192" stroke-width="3"/>
        </g>
        <g class="axes" fill="none" stroke="#0a6a0a">
          <circle cx="183" cy="297" r="12.500"/>
          <circle cx="183" cy="377" r="12.500"/>
          <circle cx="183" cy="462" r="12.500"/>
          <circle cx="591" cy="179" r="12.500"/>
          <ellipse cx="182" cy="604" rx="11" ry="13"/>
        </g>
        <g class="axtext" fill="#c8c8c8" text-anchor="middle">
          <text x="183" y="302">B</text>
          <text x="183" y="382">0</text>
          <text x="183" y="467">6</text>
          <text x="591" y="184">8</text>
          <text x="182" y="609" fill="#fff">A1</text>
        </g>
        <path d="M170 305H228M219 298L243 319M226 300L232 310" stroke="#fff" stroke-width="1.500" fill="none"/>
        <g class="gizmo">
          <path d="M225 626H256" stroke="#f00" stroke-width="3"/><path d="M256 622L263 626 256 630" fill="none" stroke="#f00"/>
          <path d="M224 626L205 606" stroke="#0f0" stroke-width="3"/>
          <path d="M225 626L238 590" stroke="#0078f0" stroke-width="3"/><path d="M237 582L241 594 233 592z" fill="#0078f0"/>
          <text x="229" y="587" fill="#0078f0" class="gz">Z</text>
          <text x="207" y="610" fill="#0f0" class="gz">Y</text>
          <text x="245" y="623" fill="#f00" class="gz">X</text>
        </g>
      </svg>

      <div class="rowd">
        <div class="grp gd1">
          <i class="grip"></i>
          <span class="t"><svg class="i"><use href="#ortho"/></svg>正交</span>
          <span class="t on"><svg class="i"><use href="#snap"/></svg>对象捕捉</span>
          <span class="t"><svg class="i"><use href="#dyn"/></svg>动态输入</span>
        </div>
        <div class="grp gd2">
          <i class="grip"></i>
          <span class="t g2x"><svg class="i"><use href="#cross"/></svg>交点</span>
          <span class="t on on-l"><svg class="i"><use href="#perp"/></svg>垂点</span>
          <span class="t on"><svg class="i"><use href="#mid"/></svg>中点</span>
          <span class="t g3x"><svg class="i"><use href="#vtx"/></svg>顶点</span>
          <span class="t g3x"><svg class="i"><use href="#coo"/></svg>坐标</span>
        </div>
        <div class="grp gd3">
          <i class="grip"></i>
          <div class="sel s5"><span>不偏移</span><i class="ddc"><i class="dd"></i></i></div>
          <i class="sep"></i>
          <span class="gray">X=</span><div class="num n1"><span>0</span><i class="spin"></i></div><span class="gray">mm</span>
          <span class="gray yl">Y=</span><div class="num n1"><span>0</span><i class="spin"></i></div><span class="gray">mm</span>
          <i class="sep"></i><i class="cb"></i><span class="rt">旋转</span>
          <div class="num n2"><span>0.000</span><i class="spin"></i></div><span class="deg">°</span>
        </div>
      </div>
    </section>

    <aside class="right">
      <div class="prop-head"><span>属性编辑器</span><svg class="pin pin-d"><use href="#pin"/></svg><svg class="xx" viewBox="0 0 10 10"><path d="M1 1l8 8M9 1L1 9" stroke="#333"/></svg></div>
      <div class="prop">
        <div class="ptable">
          <div class="r rh"><div class="c0"></div><div class="c1">属性名称</div><div class="c2">属性值</div></div>
          <div class="r"><div class="c0">1</div><div class="c1 b">名称</div><div class="c2"><i class="m">GZ-17</i></div></div>
          <div class="r"><div class="c0">2</div><div class="c1 b">类别</div><div class="c2">构造柱</div></div>
          <div class="r"><div class="c0">3</div><div class="c1 b">截面编辑</div><div class="c2">是</div></div>
          <div class="r"><div class="c0">4</div><div class="c1">截面宽<i class="m">(B</i>边<i class="m">)(mm)</i></div><div class="c2"><i class="m">200</i></div></div>
          <div class="r"><div class="c0">5</div><div class="c1">截面高<i class="m">(H</i>边<i class="m">)(mm)</i></div><div class="c2"><i class="m">700</i></div></div>
          <div class="r"><div class="c0">6</div><div class="c1 g">全部纵筋</div><div class="c2 g"><i class="m">8</i><svg class="rebar" viewBox="0 0 10 10"><path d="M1 7h8M5 1v8M2 3v4h6V3" stroke="#888" fill="none" stroke-width="1.300"/></svg><i class="m">8</i></div></div>
          <div class="r"><div class="c0">7</div><div class="c1 b">其它箍筋</div><div class="c2"></div></div>
          <div class="r"><div class="c0">8</div><div class="c1">备注</div><div class="c2"></div></div>
          <div class="r"><div class="c0">9</div><div class="c1 g grpn"><i class="box">−</i>其它属性</div><div class="c2"></div></div>
          <div class="r"><div class="c0">10</div><div class="c1 sub">汇总信息</div><div class="c2">构造柱</div></div>
          <div class="r"><div class="c0">11</div><div class="c1 sub">保护层厚度<i class="m">(mm)</i></div><div class="c2"><i class="m">(25)</i></div></div>
          <div class="r"><div class="c0">12</div><div class="c1 sub">上加密范围<i class="m">(mm)</i></div><div class="c2"></div></div>
          <div class="r"><div class="c0">13</div><div class="c1 sub">下加密范围<i class="m">(mm)</i></div><div class="c2"></div></div>
          <div class="r"><div class="c0">14</div><div class="c1 sub">插筋构造</div><div class="c2">设置插筋</div></div>
          <div class="r"><div class="c0">15</div><div class="c1 sub">插筋信息</div><div class="c2"></div></div>
          <div class="r"><div class="c0">16</div><div class="c1 sub">计算设置</div><div class="c2">按默认计算设置</div></div>
          <div class="r"><div class="c0">17</div><div class="c1 sub">节点设置</div><div class="c2">按默认节点设置</div></div>
          <div class="r"><div class="c0">18</div><div class="c1 sub">搭接设置</div><div class="c2">按默认搭接设置</div></div>
          <div class="r"><div class="c0">19</div><div class="c1 sub">顶标高<i class="m">(m)</i></div><div class="c2">层顶标高<i class="m">(23.15)</i></div></div>
          <div class="r"><div class="c0">20</div><div class="c1 sub">底标高<i class="m">(m)</i></div><div class="c2">层底标高<i class="m">+1.8(22</i></div></div>
          <div class="r rsel"><div class="c0">21</div><div class="c1 grpn"><i class="box">−</i>锚固搭接</div><div class="c2"></div></div>
          <div class="r"><div class="c0">22</div><div class="c1 sub">抗震等级</div><div class="c2"><i class="m">(</i>三级抗震<i class="m">)</i></div></div>
          <div class="r"><div class="c0">23</div><div class="c1 sub b">混凝土强度等级</div><div class="c2"><i class="m">(C25)</i></div></div>
          <div class="r"><div class="c0">24</div><div class="c1 sub"><i class="m">HPB235(A),HPB3</i></div><div class="c2"><i class="m">(36)</i></div></div>
          <div class="r"><div class="c0">25</div><div class="c1 sub"><i class="m">HRB335(B),HRB3</i></div><div class="c2"><i class="m">(35/39)</i></div></div>
          <div class="r"><div class="c0">26</div><div class="c1 sub"><i class="m">HRB400(C),HRB4</i></div><div class="c2"><i class="m">(42/47)</i></div></div>
          <div class="r"><div class="c0">27</div><div class="c1 sub"><i class="m">HRB500(E),HRB5</i></div><div class="c2"><i class="m">(51/56)</i></div></div>
          <div class="r"><div class="c0">28</div><div class="c1 sub">冷轧带肋钢筋锚</div><div class="c2"><i class="m">(42)</i></div></div>
          <div class="r"><div class="c0">29</div><div class="c1 sub">冷轧扭钢筋锚固</div><div class="c2"><i class="m">(40)</i></div></div>
          <div class="r"><div class="c0">30</div><div class="c1 sub"><i class="m">HPB235(A),HPB3</i></div><div class="c2"><i class="m">(51)</i></div></div>
          <div class="r"><div class="c0">31</div><div class="c1 sub"><i class="m">HRB335(B),HRB3</i></div><div class="c2"><i class="m">(49/55)</i></div></div>
        </div>
        <div class="pscroll"><svg class="arr" viewBox="0 0 10 6"><path d="M1 5l4-4 4 4" fill="none" stroke="#555" stroke-width="1.500"/></svg><div class="pthumb"></div><svg class="arr arr-d" viewBox="0 0 10 6"><path d="M1 1l4 4 4-4" fill="none" stroke="#555" stroke-width="1.500"/></svg></div>
      </div>
    </aside>
  </main>

  <footer class="status">
    <div class="f f1 m">X=118442 Y=-6521</div>
    <div class="f f2">层高:<i class="m">2.8m</i></div>
    <div class="f f3">底标高:<i class="m">20.35m</i></div>
    <div class="f f4 m">2(4)</div>
    <div class="f f5"></div>
    <div class="f f6 m">504.4 FPS</div>
  </footer>

  <div class="taskbar">
    <div class="start"><svg class="win" viewBox="0 0 16 16"><path d="M0 2.300l6.500-.9v6.300H0zM7.300 1.300L16 0v7.700H7.300zM0 8.300h6.500v6.300L0 13.700zM7.300 8.300H16V16l-8.700-1.200z" fill="#fff"/></svg></div>
    <div class="search"><i class="cortana"></i><span>在这里输入你要搜索的内容</span><svg class="mic" viewBox="0 0 12 18"><rect x="3.500" y="1" width="5" height="10" rx="2.500" fill="none" stroke="#999"/><path d="M1 8c0 6 10 6 10 0M6 13v4M3 17h6" fill="none" stroke="#999"/></svg></div>
    <div class="tk w48"><svg class="ti" viewBox="0 0 20 16"><rect x="5" y="1" width="10" height="13" fill="none" stroke="#fff" stroke-width="1.200"/><path d="M3 3H1v9h2M17 3h2v9h-2" fill="none" stroke="#fff"/></svg></div>
    <div class="tk w52"><svg class="ti" viewBox="0 0 20 20"><g fill="#e8e8e8"><path d="M9 9C3 9 1 6 2 2c2-2 6-1 7 1 1 2 1 4 0 6zM11 9c0-6 3-8 7-7 2 2 1 6-1 7-2 1-4 1-6 0zM11 11c6 0 8 3 7 7-2 2-6 1-7-1-1-2-1-4 0-6zM9 11c0 6-3 8-7 7-2-2-1-6 1-7 2-1 4-1 6 0z"/></g></svg></div>
    <div class="tk w51"><svg class="ti" viewBox="0 0 20 20"><path d="M3 11h13c0-5-3-7-6.500-7S3 7 3 11c0 5 3 7 6.500 7 3 0 5-1 6-3h-4" fill="none" stroke="#f0f0f0" stroke-width="2.500"/><path d="M14 2c3-1 5-1 5 1M1 17c-1 2 1 2 4 1" stroke="#f0f0f0" fill="none"/></svg></div>
    <div class="tk w50"><svg class="ti" viewBox="0 0 20 20"><path d="M10 2c-5 0-8 3-8 8s4 8 8 8 7-3 7-6-3-5-6-5-4 2-4 4 2 3 3 3" fill="none" stroke="#b0b0b0" stroke-width="1.500"/></svg></div>
    <div class="tk w49"><svg class="ti" viewBox="0 0 20 20"><path d="M2 10C2 4 6 1 11 1c5 0 8 3 8 9v2H7c0 3 2 4 5 4 2 0 4 0 6-1v3c-2 1-4 1-7 1C5 19 2 15 2 10zm5-1h7c0-3-1-4-3-4S7 6 7 9z" fill="#0a78d8"/></svg></div>
    <div class="tk w45"><svg class="ti" viewBox="0 0 20 20"><path d="M3 11h13c0-5-3-7-6.500-7S3 7 3 11c0 5 3 7 6.500 7 3 0 5-1 6-3h-4" fill="none" stroke="#1ea0e0" stroke-width="3"/><path d="M14 2c3-1 6-1 5 2-1 3-5 9-16 14" stroke="#f0c020" fill="none" stroke-width="1.500"/></svg></div>
    <div class="tk w45"><svg class="ti" viewBox="0 0 20 20"><path d="M1 3h7l2 2h9v13H1z" fill="#f4d070"/><path d="M1 8h18v10H1z" fill="#fbe39a"/><path d="M7 18v-5h6v5z" fill="#3c9ae0"/></svg></div>
    <div class="tk w45 ul"><svg class="ti" viewBox="0 0 20 20"><circle cx="10" cy="10" r="8.500" fill="#7ac84a"/><circle cx="10" cy="10" r="6" fill="#e4f4d4"/><path d="M6 10h8c0-5-8-5-8 0 0 4 5 5 8 3" fill="none" stroke="#4aa030" stroke-width="1.500"/></svg></div>
    <div class="tk w45 ul"><svg class="ti" viewBox="0 0 20 20"><path d="M15 3c-6-3-13 2-12 9 1 6 10 8 13 2 1-3 0-5-2-5h-4v3h3" fill="none" stroke="#1e90e8" stroke-width="3.500"/></svg></div>
    <div class="tk w44 act ul"><svg class="ti ti2" viewBox="0 0 20 20"><rect width="20" height="20" rx="3" fill="#1c9af0"/><path d="M10 3v14M4 8v3h12V8a2 2 0 0 0-4 0M7 13a2 2 0 0 0 0 4" fill="none" stroke="#fff" stroke-width="1.600"/></svg></div>
    <div class="tk w44 ul"><svg class="ti ti2" viewBox="0 0 20 20"><rect width="20" height="20" rx="2" fill="#e89a1c"/><rect x="3" y="3" width="14" height="15" fill="#fbeab0"/><path d="M5 7h8M5 10h8M5 13h6" stroke="#a87020"/><path d="M9 13l8-11" stroke="#c04820" stroke-width="2"/></svg></div>
    <div class="tk w50 tx">链接</div>
    <div class="tk w64 cpu"><span>30%</span><span>CPU使用</span></div>
    <div class="tk w6"></div>
    <div class="tk w24"><svg class="ts" viewBox="0 0 12 12"><path d="M1 8l5-5 5 5" fill="none" stroke="#fff"/></svg></div>
    <div class="tk w24"><svg class="ts" viewBox="0 0 12 14"><path d="M6 1c3 0 4 2 4 5 0 2 1 3 2 5H0c1-2 2-3 2-5 0-3 1-5 4-5zM4 12h4a2 2 0 0 1-4 0z" fill="#fff"/></svg></div>
    <div class="tk w24"><svg class="ts ts2" viewBox="0 0 16 12"><rect x="3" y="3" width="12" height="8" fill="none" stroke="#fff"/><rect x="4" y="5" width="6" height="5" fill="#fff"/><path d="M2 0v3M5 0v3" stroke="#fff"/></svg></div>
    <div class="tk w25"><svg class="ts ts2" viewBox="0 0 16 14"><path d="M1 13A12 12 0 0 1 13 1M4 13a9 9 0 0 1 9-9M7 13a6 6 0 0 1 6-6M10 13a3 3 0 0 1 3-3" fill="none" stroke="#ddd"/></svg></div>
    <div class="tk w23"><svg class="ts ts2" viewBox="0 0 14 14"><path d="M1 5h3l4-4v12l-4-4H1z" fill="none" stroke="#fff"/><path d="M10 4q2 3 0 6M12 2q3 5 0 10" fill="none" stroke="#aaa"/></svg></div>
    <div class="tk w30"><svg class="kbd" viewBox="0 0 22 14"><rect x=".5" y=".5" width="21" height="13" fill="none" stroke="#fff"/><path d="M3 4h16M3 7h16" stroke="#fff" stroke-dasharray="1.500 1"/><path d="M6 10.500h10" stroke="#fff"/></svg></div>
    <div class="tk w26 tx2">英</div>
    <div class="tk w30"><svg class="ts" viewBox="0 0 14 16"><path d="M2 1l11-1 1 13-11 3-2-8z" fill="#e8501c"/><path d="M10 5H6v3h4v3H5" fill="none" stroke="#fff" stroke-width="1.600"/></svg></div>
    <div class="tk w74 clock"><span>9:53</span><span>2018/7/24</span></div>
    <div class="tk w46"><svg class="notif" viewBox="0 0 16 16"><path d="M1 1h14v11H9l-2 3v-3H1z" fill="none" stroke="#fff" stroke-width="1.200"/></svg></div>
  </div>
</div>

<div class="badge"><span>70</span></div>
<div class="sogou">
  <svg class="s-logo" viewBox="0 0 26 28"><path d="M2 6Q2 3 5 2.500L20 .5Q23 0 23.500 3L26 19Q26 22 23 23L8 27Q5 28 4 25z" fill="#ee5a24"/><path d="M20 7H11Q8 7 8 10T11 13H16Q19 13 19 16T16 19H8" fill="none" stroke="#fff" stroke-width="3.500"/></svg>
  <b class="s-en">英</b>
  <svg class="s-i s-sm" viewBox="0 0 12 12"><circle cx="3" cy="3" r="1.500" fill="#2a7fd0"/><path d="M8 4c2 1 2 3 0 5" fill="none" stroke="#2a7fd0" stroke-width="1.500"/></svg>
  <svg class="s-i" viewBox="0 0 16 16"><circle cx="8" cy="8" r="7" fill="none" stroke="#2a7fd0" stroke-width="1.300"/><circle cx="5.500" cy="6" r="1" fill="#2a7fd0"/><circle cx="10.500" cy="6" r="1" fill="#2a7fd0"/><path d="M4.500 10c2 2 5 2 7 0" fill="none" stroke="#2a7fd0"/></svg>
  <svg class="s-i" viewBox="0 0 16 16"><rect x="5" y="0" width="6" height="11" rx="3" fill="#2a7fd0"/><path d="M2 7c0 6 12 6 12 0M8 12v3M4 16h8" fill="none" stroke="#2a7fd0" stroke-width="1.300"/></svg>
  <svg class="s-i s-k" viewBox="0 0 16 12"><rect width="16" height="12" rx="2" fill="#2a7fd0"/><path d="M2 3h12M2 6h12" stroke="#fff" stroke-dasharray="1.500 1"/><path d="M4 9h8" stroke="#fff"/></svg>
  <svg class="s-i" viewBox="0 0 16 16"><circle cx="6" cy="5" r="3" fill="#b8c0c8"/><path d="M1 14c0-4 2-5 5-5 2 0 3 .5 3 2v3z" fill="#b8c0c8"/><rect x="9" y="9" width="7" height="6" fill="#c8d0d8"/></svg>
  <svg class="s-i" viewBox="0 0 16 16"><path d="M5 1L0 4l2 4 2-1v8h8V7l2 1 2-4-5-3c-1 2-5 2-6 0z" fill="#2a7fd0"/></svg>
  <svg class="s-i" viewBox="0 0 16 16"><path d="M15 3l-3 3-2-2 3-3c-3-1-6 1-5 5L1 13c-1 2 0 3 2 2l7-7c4 1 6-2 5-5z" fill="#2a7fd0"/></svg>
</div>
</body>
</html>
```
FILE: styles.css
```css
* { box-sizing: border-box; }
html, body { margin: 0; padding: 0; }
body {
  width: 1366px; height: 768px; overflow: hidden; position: relative;
  background: #f0f0f0; color: #111;
  font: 12px/16px "Noto Sans", "Noto Sans CJK SC", "Liberation Sans", sans-serif;
}
i { font-style: normal; }
.defs { display: none; }
.app { display: flex; flex-direction: column; width: 1366px; height: 768px; }

/* title */
.title { height: 23px; background: #fff; display: flex; align-items: center; padding-left: 2px; }
.appicon { width: 15px; height: 15px; margin-right: 6px; flex: none; }
.title-text { font-size: 12px; white-space: nowrap; color: #111; letter-spacing: 0.33px; }
.winbtns { position: absolute; top: 4px; right: 19px; display: flex; gap: 33px; }
.wb { width: 12px; height: 12px; }

/* menu */
.menubar { height: 30px; display: flex; align-items: center; padding-left: 7px; background: #f0f0f0; gap: 11px; white-space: nowrap; position: relative; }
.mi { color: #222; }
.mi:nth-child(9) { margin-left: 2px; }
.mi:nth-child(13) { margin-left: 1px; }
.mi:nth-child(14) { margin-left: -1px; }
.newchg { margin-left: -1px; gap: 3px; }
.xiao { margin-left: -4px; gap: 3px; }
.news { position: absolute; left: 938px; top: 2px; width: 186px; height: 28px; padding-left: 28px; line-height: 28px; background: #f6f6f6; color: #3c7a0c; }
.user { position: absolute; left: 1130px; top: 7px; gap: 4px; }
.bean { position: absolute; left: 1248px; top: 7px; }
.bell { position: absolute; left: 1304px; top: 7px; width: 13px; height: 15px; }
.more { font: bold 11px/10px "Liberation Sans", sans-serif; color: #222; }
.more-m { position: absolute; left: 1354px; top: 5px; }
.dd { display: inline-block; width: 0; height: 0; border: 3px solid transparent; border-top: 3px solid #111; border-bottom: 0; flex: none; }

/* toolbars */
.tb1 { height: 29px; display: flex; background: #f0f0f0; gap: 2px; padding-left: 2px; }
.grp { display: flex; align-items: center; gap: 8px; height: 100%; background: #f8f8f8; border-radius: 3px; position: relative; white-space: nowrap; }
.i { width: 16px; height: 16px; flex: none; display: block; overflow: visible; }
.t { display: inline-flex; align-items: center; gap: 4px; color: #111; white-space: nowrap; }
.t .dd { margin-left: 3px; }
.t .dd-n { margin-left: 2px; }
.t .dd-s { margin-left: 1px; }
.t .dd-x { margin-left: -1px; }
.t .dd-m { margin-left: 3px; }
.t .dd-u { margin-left: 3px; }
.off, .t.off { color: #9c9c9c; }
.on, .on2 { border: 1px solid #0a7ad8; background: #dbe9f7; padding: 0 2px; margin: 0 -3px; height: 24px; }
.on2 { background: #b4d4f2; }
.sep { width: 1px; height: 19px; background: #bbb; flex: none; margin: 0 -2px; }
.grip { width: 3px; height: 15px; flex: none; margin: 0 -4px 0 0; background-image: radial-gradient(circle, #a8a8a8 1px, transparent 1.200px); background-size: 3px 4px; }
.g1 { width: 149px; padding-left: 2px; gap: 6px; }
.g1 .fo { margin-left: 2px; }
.g1 .sv { margin-left: 3px; }
.g1 .sep { margin: 0; }
.g1 .more { position: absolute; left: 139px; top: 5px; }
.g2 { width: 548px; padding-left: 4px; gap: 7.25px; }
.sigma { font: bold 15px/16px "Liberation Serif", serif; width: 14px; text-align: center; margin-right: 3px; }
.m-end { position: absolute; right: 3px; top: 5px; }
.g3 { width: 663px; padding-left: 5px; background: #f0f0f0; gap: 7px; }
.g3 .sep { margin: 0 -3px 0 1px; }
.g3 .sep-b { margin: 0 -1px 0 -4px; }
.w3 { background: #fff; height: 28px; gap: 2px; }
.w3 .dd { margin-left: 5px; }

.work { flex: none; height: 624px; display: flex; gap: 4px; padding-top: 2px; }

/* left */
.left { width: 166px; display: flex; flex-direction: column; }
.nav-head { height: 15px; background: #0a50d8; color: #fff; display: flex; align-items: center; font-size: 12px; padding-right: 4px; letter-spacing: 0.7px; }
.nav-head span { flex: 1; }
.pin { width: 8px; height: 10px; margin-right: 12px; }
.xx { width: 9px; height: 9px; }
.navbtn { height: 22px; margin-top: 1px; line-height: 23px; text-align: center; background: #f0f0f0; border: 1px solid #b4b4b4; border-right-color: #a8a8a8; border-bottom-color: #8c8c8c; font-size: 12px; flex: none; }
.h21 { height: 21px; line-height: 22px; }
.treebox { margin-top: 0; height: 515px; border: 1px solid #a0a0a0; margin-left: 1px; width: 163px; background: #f0f0f0; display: flex; flex-direction: column; padding: 1px; flex: none; }
.treetool { height: 28px; background: #fff; display: flex; align-items: center; gap: 5px; padding-left: 5px; flex: none; }
.pm { width: 18px; height: 14px; }
.treewrap { flex: 1; display: flex; overflow: hidden; min-height: 0; background: #fff; }
.tree { width: 143px; overflow: hidden; background-image: linear-gradient(#888 50%, transparent 50%), linear-gradient(#888 50%, transparent 50%); background-size: 1px 2px, 1px 2px; background-position: 13px 0, 32px 0; background-repeat: repeat-y, repeat-y; }
.n { height: 16px; display: flex; align-items: center; white-space: nowrap; position: relative; isolation: isolate; flex: none; }
.leaf { padding-left: 44px; }
.leaf .i { margin-right: 4px; }
.leaf::before { content: ""; position: absolute; left: 32px; top: 8px; width: 12px; border-top: 1px dotted #777; }
.fold { padding-left: 24px; background: #fff; background-image: linear-gradient(#888 50%, transparent 50%); background-size: 1px 2px; background-position: 13px 0; background-repeat: repeat-y; }
.fold .i { margin-right: 3px; }
.chev { position: absolute; left: 10px; top: 5px; width: 7px; height: 7px; border: solid #555; border-width: 0 1.500px 1.500px 0; transform: rotate(45deg) translate(-2px, -2px); background: #fff; }
.m { font-family: "Liberation Mono", monospace; font-size: 12px; letter-spacing: -1.2px; }
.hl { position: relative; padding-right: 5px; height: 16px; line-height: 16px; }
.hl::before { content: ""; position: absolute; left: -23px; right: 0; top: 0; bottom: 0; background: #d9d9d9; z-index: -1; }
.vscroll { width: 17px; background: #f0f0f0; position: relative; flex: none; }
.arr { position: absolute; left: 4px; top: 7px; width: 9px; height: 6px; }
.arr-d { top: auto; bottom: 5px; }
.vthumb { position: absolute; left: 0; top: 100px; width: 17px; height: 225px; background: #c6c6c6; }
.hscroll { height: 16px; background: #f0f0f0; position: relative; flex: none; }
.hthumb { position: absolute; left: 19px; top: 0; width: 102px; height: 16px; background: #c6c6c6; }
.arrh { position: absolute; left: 7px; top: 3px; width: 6px; height: 10px; }
.arrh-r { left: auto; right: 22px; }

/* middle */
.mid { width: 928px; display: flex; flex-direction: column; }
.rowa { height: 26px; display: flex; }
.ga { width: 790px; margin-left: 1px; padding-left: 3px; gap: 7.6px; }
.ga .sep { margin: 0 -1.6px; }
.rowb { height: 26px; margin-top: 2px; display: flex; gap: 1px; }
.gb1 { width: 567px; padding-left: 9px; gap: 7px; }
.gb2 { flex: 1; padding-left: 5px; gap: 7px; }
.gb2 .grip { margin-right: -3px; }
.gb2 .t .dd { margin-left: 2px; }
.m-b { position: absolute; left: 349px; top: 5px; }
.sel { background: #fff; height: 22px; display: flex; align-items: center; justify-content: space-between; padding-left: 2px; flex: none; }
.ddc { width: 13px; height: 22px; background: #f4f4f4; display: flex; align-items: center; justify-content: center; }
.gb1 .sel { margin-right: -5px; }
.s1 { width: 58px; } .s2 { width: 71px; } .s3 { width: 70px; } .s4 { width: 70px; }
.gb1 .sb { margin: 0 -3px 0 3px; }
.rowc { height: 25px; margin-top: 2px; display: flex; gap: 4px; }
.gc { width: 832px; margin-left: 1px; padding-left: 3px; gap: 7.1px; }
.gc .grip { margin-right: -3px; }
.gc .sep { margin: 0 -2.5px 0 0; }
.gc .t .dd { margin-left: 2px; }
.gc .t .dd-y { margin-left: -2px; }
.gc2 { width: 27px; padding-left: 2px; }
.canvas { width: 928px; height: 510px; display: block; margin-top: 1px; shape-rendering: crispEdges; flex: none; }
.canvas circle, .canvas ellipse { shape-rendering: auto; }
.axtext { font: 14px "Liberation Sans", sans-serif; }
.gz { font: 12px "Liberation Sans", sans-serif; }
.rowd { height: 28px; margin-top: 1px; display: flex; gap: 2px; }
.gd1 { width: 209px; margin-left: 1px; padding-left: 3px; gap: 7px; }
.gd2 { width: 263px; padding-left: 4px; }
.gd3 { width: 410px; padding-left: 4px; gap: 4px; }
.t.g2x { gap: 2px; }
.t.g3x { gap: 3px; }
.on-l { margin-right: -4px; }
.s5 { width: 58px; padding-left: 3px; }
.gd3 .sep { margin: 0 -3px 0 1px; }
.gray { color: #8a8a8a; }
.yl { margin-left: 2px; }
.num { height: 23px; border: 1px solid #8a8a8a; background: #f4f4f4; color: #888; display: flex; align-items: center; justify-content: flex-end; gap: 5px; padding-right: 3px; font-size: 12px; flex: none; }
.n1 { width: 58px; }
.n2 { width: 64px; }
.spin { width: 6px; height: 15px; position: relative; display: block; }
.spin::before, .spin::after { content: ""; position: absolute; left: 0; border: 3px solid transparent; }
.spin::before { top: -2px; border-bottom-color: #444; border-top: 0; }
.spin::after { bottom: -2px; border-top-color: #444; border-bottom: 0; }
.cb { width: 10px; height: 10px; border: 1px solid #999; background: #f8f8f8; flex: none; margin: 0 2px 0 -2px; }
.rt { margin: 0 0 0 2px; }
.deg { color: #666; margin-left: 3px; }

/* right */
.right { width: 264px; display: flex; flex-direction: column; }
.prop-head { height: 15px; margin-top: 0; border: 1px solid #8c8c8c; background: #f0f0f0; display: flex; align-items: center; padding: 0 7px 0 0; font-size: 12px; letter-spacing: 0.7px; }
.prop-head span { flex: 1; }
.pin-d { margin-right: 12px; }
.prop { margin-top: 2px; height: 605px; border: 1px solid #9a9a9a; background: #fff; display: flex; padding-left: 1px; width: 263px; overflow: hidden; }
.ptable { width: 241px; overflow: hidden; height: 603px; flex: none; }
.r { display: grid; grid-template-columns: 21px 120px 99px; height: 19px; }
.r > div { border-right: 1px solid #bfbfbf; border-bottom: 1px solid #bfbfbf; white-space: nowrap; overflow: hidden; line-height: 23px; position: relative; }
.r > .c0 { background: #f0f0f0; text-align: center; font: 12px/21px "Liberation Mono", monospace; letter-spacing: -1.2px; }
.c1 { padding-left: 20px; }
.c2 { padding-left: 2px; padding-top: 3px; display: flex; align-items: center; }
.rh { height: 22px; }
.r.rh > div { text-align: center; line-height: 21px; background: #f8f8f8; padding: 0; display: block; }
.r.rh > .c2 { background: linear-gradient(#fae0ac, #f0b45c); color: #7a0a82; font-size: 12px; }
.b { color: #0000e0; }
.g { color: #8c8c8c; }
.rebar { width: 11px; height: 11px; margin: 0 1px 0 2px; }
.sub { padding-left: 30px; }
.sub::before { content: ""; position: absolute; left: 8px; top: 0; bottom: 0; width: 17px; border-left: 1px solid #c8c8c8; background: linear-gradient(#c8c8c8, #c8c8c8) 0 9px / 17px 1px no-repeat; }
.box { position: absolute; left: 2px; top: 3px; width: 12px; height: 12px; border: 1px solid #aaa; background: #fff; color: #333; font: 12px/10px "Liberation Sans", sans-serif; text-align: center; }
.r.rsel > .c0 { background: #fcd08c; color: #7a0a82; }
.r.rsel > .c1 { background: #0078d7; color: #fff; }
.r.rsel > .c2 { background: #d5e8f8; }
.pscroll { flex: 1; position: relative; background: #f0f0f0; margin-left: 1px; }
.pthumb { position: absolute; left: 2px; top: 19px; width: 15px; height: 408px; background: #c6c6c6; }
.pscroll .arr { left: 5px; }

/* status */
.status { height: 22px; background: #f0f0f0; display: flex; gap: 3px; padding-top: 2px; padding-bottom: 1px; }
.f { border: 1px solid #d8d8d8; border-color: #ccc #e4e4e4 #e4e4e4 #ccc; background: #f6f6f6; padding-left: 2px; line-height: 17px; white-space: nowrap; }
.f1 { width: 148px; } .f2 { width: 78px; } .f3 { width: 97px; } .f4 { width: 47px; } .f5 { width: 912px; } .f6 { flex: 1; }

/* taskbar */
.taskbar { height: 40px; background: #05101a; display: flex; align-items: stretch; }
.start { width: 48px; background: #000; display: flex; align-items: center; justify-content: center; }
.win { width: 16px; height: 16px; }
.search { width: 344px; background: #333; display: flex; align-items: center; color: #8f8f8f; font-size: 14px; position: relative; }
.cortana { width: 20px; height: 20px; border: 3px solid #e6e6e6; border-radius: 50%; margin: 0 6px 0 10px; display: block; }
.mic { position: absolute; left: 317px; top: 11px; width: 12px; height: 18px; }
.tk { display: flex; align-items: center; justify-content: center; flex: none; position: relative; color: #fff; }
.ti { width: 20px; height: 20px; }
.ti2 { width: 18px; height: 18px; }
.ul::after { content: ""; position: absolute; left: 2px; right: 2px; bottom: 0; height: 2px; background: #76b9ed; }
.act { background: #2a3742; }
.w48 { width: 48px; } .w52 { width: 52px; } .w51 { width: 51px; } .w50 { width: 50px; } .w49 { width: 49px; } .w45 { width: 45px; } .w44 { width: 44px; } .w64 { width: 64px; } .w6 { width: 6px; } .w24 { width: 24px; } .w25 { width: 25px; } .w23 { width: 23px; } .w30 { width: 30px; } .w26 { width: 26px; } .w74 { width: 74px; } .w46 { width: 46px; }
.tx { font-size: 12px; }
.cpu, .clock { flex-direction: column; line-height: 17px; font-size: 12px; }
.ts { width: 13px; height: 14px; }
.ts2 { width: 16px; height: 14px; }
.kbd { width: 22px; height: 14px; }
.tx2 { font-size: 14px; }
.notif { width: 16px; height: 16px; }

/* overlays */
.badge { position: absolute; left: 780px; top: -27px; width: 45px; height: 45px; border-radius: 50%; background: #3db850; border: 2px solid #dfe6df; color: #fff; font: bold 12px/14px "Liberation Sans", sans-serif; text-align: center; padding-top: 29px; box-shadow: 0 1px 2px #999; }
.sogou { position: absolute; left: 969px; top: 3px; width: 205px; height: 24px; display: flex; align-items: center; gap: 9px; padding-left: 32px; }
.sogou::before { content: ""; position: absolute; left: 21px; top: 0; right: 0; bottom: 0; background: #fff; border: 1px solid #b4cfe2; }
.s-logo { position: absolute; left: 0; top: -2px; width: 26px; height: 28px; z-index: 1; }
.s-en { position: relative; color: #1e6ec8; font-size: 14px; width: 16px; }
.s-i { position: relative; width: 15px; height: 15px; }
.s-sm { width: 10px; }
.s-k { width: 16px; }
```
